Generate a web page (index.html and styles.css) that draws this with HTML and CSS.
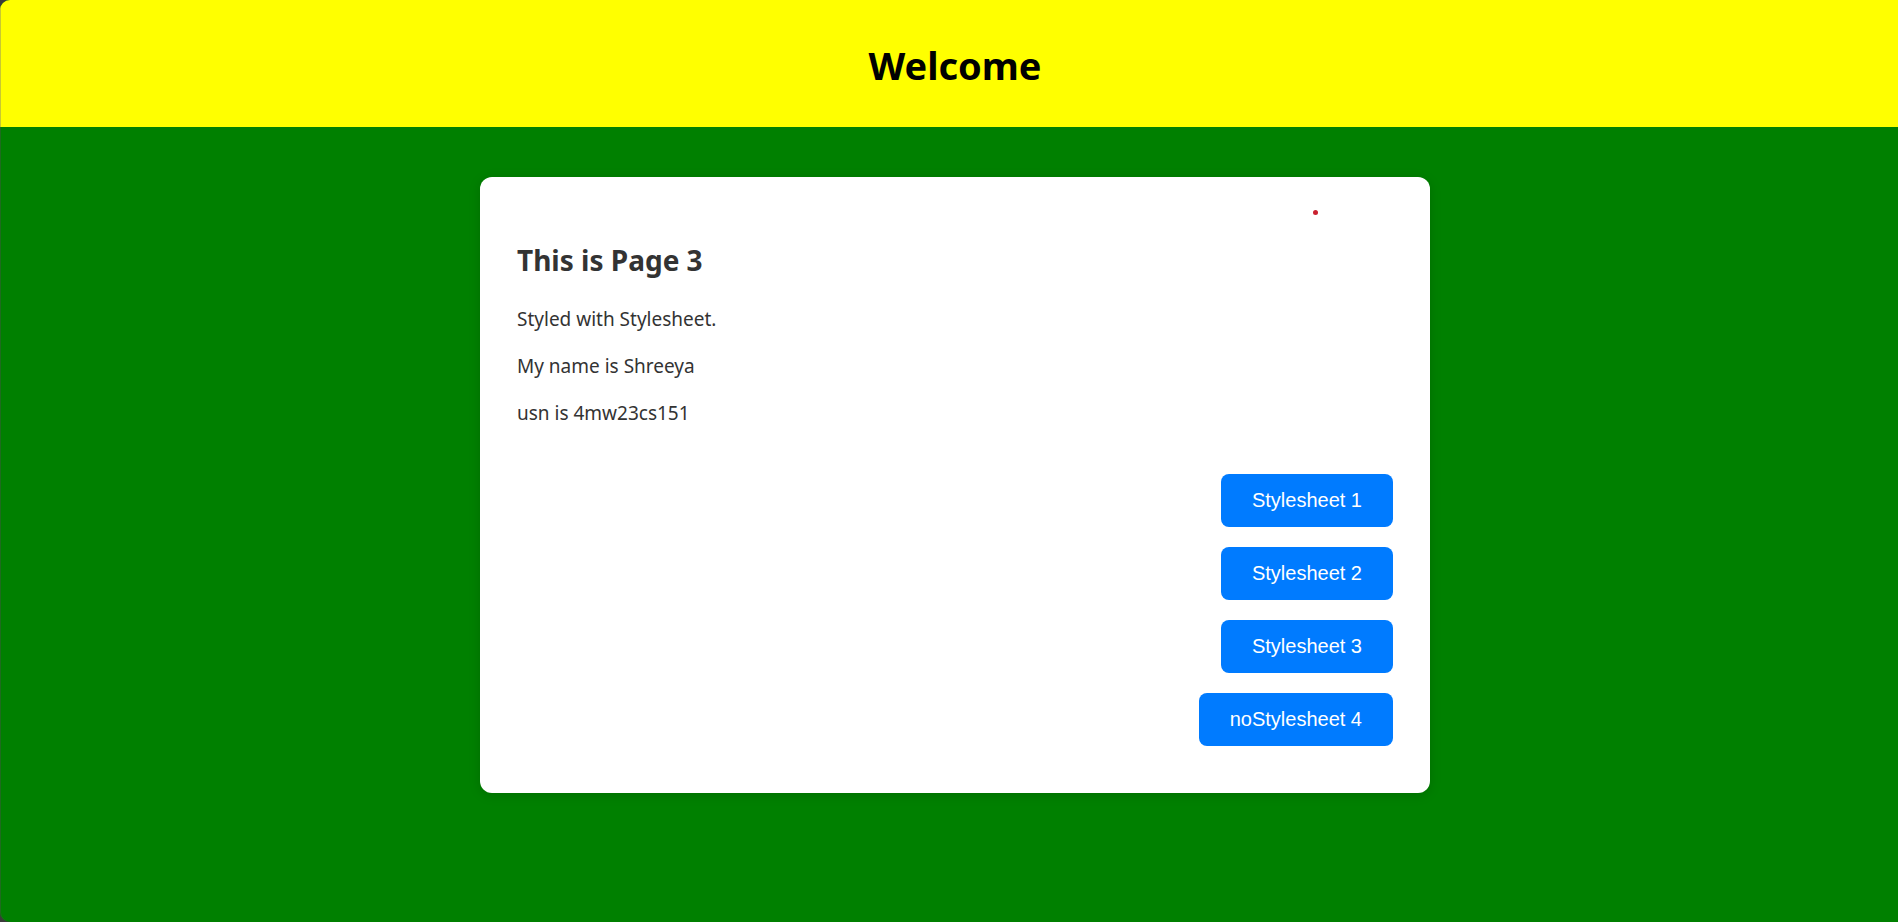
FILE: index.html
```html
<!DOCTYPE html>
<html lang="en">
<head>
<meta charset="utf-8">
<title>Page 3</title>
<link rel="stylesheet" href="styles.css">
</head>
<body class="page">
<header class="header"><h1 class="header-title">Welcome</h1></header>
<main class="content">
<section class="card">
<span class="dot"></span>
<h2 class="card-title">This is Page 3</h2>
<p class="text">Styled with Stylesheet.</p>
<p class="text">My name is Shreeya</p>
<p class="text">usn is 4mw23cs151</p>
<div class="actions">
<button class="button" type="button">Stylesheet 1</button>
<button class="button" type="button">Stylesheet 2</button>
<button class="button" type="button">Stylesheet 3</button>
<button class="button" type="button">noStylesheet 4</button>
</div>
</section>
</main>
</body>
</html>
```
FILE: styles.css
```css
* {
  box-sizing: border-box;
}

html {
  background: #3b3b3b;
}

.page {
  margin: 0;
  min-height: 100vh;
  overflow: hidden;
  border-radius: 10px 0 0 10px;
  background: #008000;
  box-shadow: inset 1px 0 #1f6b1f;
  color: #333;
  font-family: "Segoe UI", "Noto Sans", sans-serif;
}

.header {
  padding: 38px 20px 35px 32px;
  background: #ff0;
  box-shadow: inset 1px 0 #c8c832;
  color: #000;
  text-align: center;
}

.header-title {
  margin: 0;
  font-size: 38px;
  line-height: 54px;
}

.content {
  padding: 50px 20px 50px 32px;
}

.card {
  position: relative;
  max-width: 950px;
  margin: 0 auto;
  padding: 63px 37px 47px;
  border-radius: 12px;
  background: #fff;
  box-shadow: 0 2px 12px rgba(0, 0, 0, 0.15);
}

.card-title {
  margin: 0 0 26px;
  font-size: 28px;
  line-height: 40px;
}

.text {
  margin: 0 0 20px;
  font-size: 19px;
  line-height: 27px;
}

.actions {
  display: flex;
  flex-direction: column;
  align-items: flex-end;
  gap: 20px;
  margin-top: 47px;
}

.button {
  padding: 15px 31px;
  border: none;
  border-radius: 8px;
  background: #007bff;
  color: #fff;
  font-family: "Liberation Sans", Arial, sans-serif;
  font-size: 20px;
  line-height: 23px;
  cursor: pointer;
}

.dot {
  position: absolute;
  top: 33px;
  right: 112px;
  width: 5px;
  height: 5px;
  border-radius: 50%;
  background: #c9202f;
}
```
